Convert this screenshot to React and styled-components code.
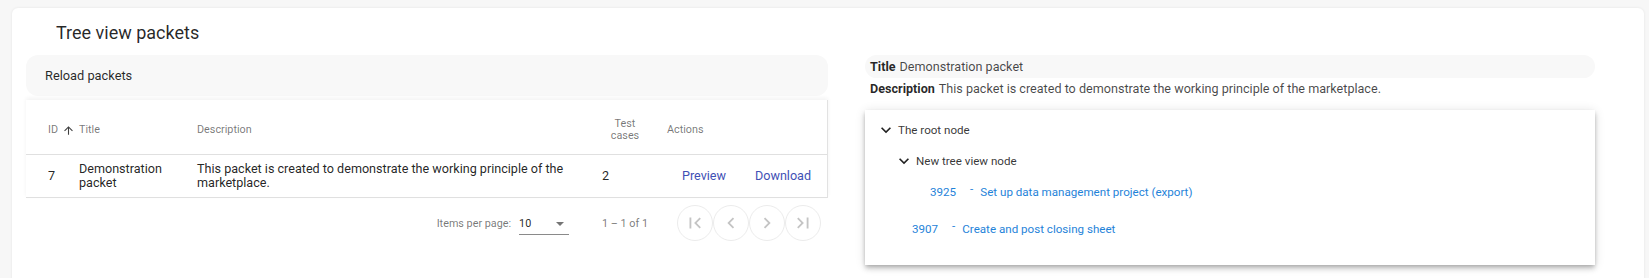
import styled, { createGlobalStyle } from "styled-components";

const GlobalStyle = createGlobalStyle`
  body {
    margin: 0;
    background: #f7f7f7;
    font-family: Roboto, "Liberation Sans", sans-serif;
  }
`;

const Page = styled.div`
  padding: 8px 5px 0 12px;
`;

const Card = styled.div`
  background: #fff;
  border-radius: 6px;
  box-shadow: 0 0 3px rgba(0, 0, 0, 0.08);
  padding: 14px 14px 30px;
`;

const Heading = styled.h2`
  margin: 0 0 12px 30px;
  font-size: 18px;
  font-weight: 400;
  line-height: 21px;
  color: rgba(0, 0, 0, 0.85);
`;

const Columns = styled.div`
  display: grid;
  grid-template-columns: 802px 1fr;
`;

const LeftCol = styled.div`
  display: flex;
  flex-direction: column;
`;

const ReloadBar = styled.div`
  height: 41px;
  display: flex;
  align-items: center;
  padding-left: 19px;
  background: #f8f8f8;
  border-radius: 12px;
  font-size: 12.8px;
  color: rgba(0, 0, 0, 0.85);
`;

const TableWrap = styled.div`
  margin-top: 4px;
  background: #fff;
  border-right: 1px solid #e2e2e2;
  box-shadow: 0 -2px 4px rgba(0, 0, 0, 0.05);
`;

const Row = styled.div`
  display: grid;
  grid-template-columns: 31px 118px 405px 65px 1fr;
  align-items: center;
  box-sizing: border-box;
  padding-left: 22px;
  padding-top: ${(p) => (p.$head ? "6px" : "0")};
  border-bottom: 1px solid #e0e0e0;
  height: ${(p) => (p.$head ? "55px" : "43px")};
  font-size: ${(p) => (p.$head ? "10.8px" : "12.6px")};
  line-height: ${(p) => (p.$head ? "12.5px" : "14px")};
  color: ${(p) => (p.$head ? "rgba(0, 0, 0, 0.54)" : "rgba(0, 0, 0, 0.87)")};
`;

const SortCell = styled.div`
  display: flex;
  align-items: center;
  gap: 4px;
  svg {
    width: 13px;
    height: 13px;
    fill: rgba(0, 0, 0, 0.75);
  }
`;

const TestHead = styled.div`
  width: 46px;
  text-align: center;
`;

const Actions = styled.div`
  display: flex;
`;

const ActionButton = styled.button`
  border: 0;
  background: none;
  padding: 0 14px 0 15px;
  font: inherit;
  font-size: 12.6px;
  color: #3f51b5;
  cursor: pointer;
`;

const Pager = styled.div`
  margin-top: 7px;
  height: 36px;
  display: flex;
  align-items: center;
  justify-content: flex-end;
  padding-right: 7px;
  font-size: 10.8px;
  color: rgba(0, 0, 0, 0.54);
`;

const PageSelect = styled.div`
  margin-left: 8px;
  width: 50px;
  height: 20px;
  display: flex;
  align-items: center;
  justify-content: space-between;
  border-bottom: 1px solid #8a8a8a;
  color: rgba(0, 0, 0, 0.87);
  margin-top: 2px;
  span {
    border-left: 4.5px solid transparent;
    border-right: 4.5px solid transparent;
    border-top: 4.5px solid #757575;
    margin-right: 5px;
  }
`;

const RangeLabel = styled.div`
  margin: 0 29px 0 33px;
`;

const PageButton = styled.button`
  width: 36px;
  height: 36px;
  border-radius: 50%;
  border: 1px solid #ececec;
  background: #fff;
  padding: 0;
  display: flex;
  align-items: center;
  justify-content: center;
  svg {
    width: 22px;
    height: 22px;
    fill: #c4c4c4;
  }
`;

const RightCol = styled.div`
  padding: 0 35px 0 37px;
  font-size: 12.6px;
  color: rgba(0, 0, 0, 0.72);
`;

const TitleBar = styled.div`
  height: 23px;
  display: flex;
  align-items: center;
  padding-left: 5px;
  background: #f8f8f8;
  border-radius: 12px;
`;

const DescLine = styled.div`
  margin-top: 2px;
  height: 16px;
  display: flex;
  align-items: center;
  padding-left: 5px;
`;

const Label = styled.b`
  margin-right: 4px;
  color: rgba(0, 0, 0, 0.85);
`;

const TreeCard = styled.div`
  margin-top: 14px;
  height: 155px;
  box-sizing: border-box;
  padding: 4px 0 0 16px;
  background: #fff;
  box-shadow: 0 2px 4px -1px rgba(0, 0, 0, 0.2), 0 4px 5px 0 rgba(0, 0, 0, 0.14),
    0 1px 10px 0 rgba(0, 0, 0, 0.12);
`;

const NodeRow = styled.div`
  height: 31px;
  display: flex;
  align-items: center;
  font-size: 11.6px;
  color: rgba(0, 0, 0, 0.8);
  svg {
    width: 10px;
    height: 10px;
    margin-right: 7px;
    fill: #222;
  }
`;

const Children = styled.div`
  margin-left: 18px;
  padding-bottom: ${(p) => (p.$gap ? "5px" : "0")};
`;

const Leaf = styled.div`
  height: 32px;
  display: flex;
  align-items: center;
  padding-left: 13px;
  font-size: 11.6px;
  color: #1f83d9;
`;

const LeafId = styled.span`
  margin-right: 14px;
`;

const Dash = styled.span`
  margin-right: 7px;
  position: relative;
  top: -3px;
`;

const Chevron = () => (
  <svg viewBox="6 6 12 12">
    <path d="M16.59 8.59L12 13.17 7.41 8.59 6 10l6 6 6-6z" />
  </svg>
);

const icons = {
  first: "M18.41 16.59L13.82 12l4.59-4.59L17 6l-6 6 6 6zM6 6h2v12H6z",
  prev: "M15.41 7.41L14 6l-6 6 6 6 1.41-1.41L10.83 12z",
  next: "M10 6L8.59 7.41 13.17 12l-4.58 4.59L10 18l6-6z",
  last: "M5.59 7.41L10.18 12l-4.59 4.59L7 18l6-6-6-6zM16 6h2v12h-2z",
};

const TreeLeaf = ({ id, title }) => (
  <Leaf>
    <LeafId>{id}</LeafId>
    <Dash>-</Dash>
    {title}
  </Leaf>
);

const App = () => {
  return (
    <>
      <GlobalStyle />
      <Page>
        <Card>
          <Heading>Tree view packets</Heading>
          <Columns>
            <LeftCol>
              <ReloadBar>Reload packets</ReloadBar>
              <TableWrap>
                <Row $head>
                  <SortCell>
                    ID
                    <svg viewBox="0 0 24 24">
                      <path d="M4 12l1.41 1.41L11 7.83V20h2V7.83l5.58 5.59L20 12l-8-8-8 8z" />
                    </svg>
                  </SortCell>
                  <div>Title</div>
                  <div>Description</div>
                  <TestHead>
                    Test
                    <br />
                    cases
                  </TestHead>
                  <div>Actions</div>
                </Row>
                <Row>
                  <div>7</div>
                  <div>
                    Demonstration
                    <br />
                    packet
                  </div>
                  <div>
                    This packet is created to demonstrate the working principle
                    of the
                    <br />
                    marketplace.
                  </div>
                  <div>2</div>
                  <Actions>
                    <ActionButton>Preview</ActionButton>
                    <ActionButton>Download</ActionButton>
                  </Actions>
                </Row>
              </TableWrap>
              <Pager>
                Items per page:
                <PageSelect>
                  10
                  <span />
                </PageSelect>
                <RangeLabel>1 – 1 of 1</RangeLabel>
                {["first", "prev", "next", "last"].map((k) => (
                  <PageButton key={k} disabled>
                    <svg viewBox="0 0 24 24">
                      <path d={icons[k]} />
                    </svg>
                  </PageButton>
                ))}
              </Pager>
            </LeftCol>
            <RightCol>
              <TitleBar>
                <Label>Title</Label>
                Demonstration packet
              </TitleBar>
              <DescLine>
                <Label>Description</Label>
                This packet is created to demonstrate the working principle of
                the marketplace.
              </DescLine>
              <TreeCard>
                <NodeRow>
                  <Chevron />
                  The root node
                </NodeRow>
                <Children>
                  <NodeRow>
                    <Chevron />
                    New tree view node
                  </NodeRow>
                  <Children $gap>
                    <TreeLeaf
                      id="3925"
                      title="Set up data management project (export)"
                    />
                  </Children>
                  <TreeLeaf id="3907" title="Create and post closing sheet" />
                </Children>
              </TreeCard>
            </RightCol>
          </Columns>
        </Card>
      </Page>
    </>
  );
};

export default App;
